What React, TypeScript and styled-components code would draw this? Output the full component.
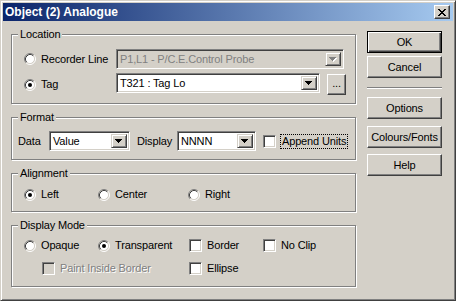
import React from "react";
import styled, { createGlobalStyle } from "styled-components";

const FACE = "#d4d0c8";
const SHADOW = "#808080";
const DARK = "#404040";
const WHITE = "#ffffff";

const GlobalStyle = createGlobalStyle`
  html, body {
    margin: 0;
    padding: 0;
    background: ${FACE};
  }
  body {
    font-family: "Liberation Sans", Arial, sans-serif;
    font-size: 11px;
    letter-spacing: -0.15px;
    color: #000;
  }
  * {
    box-sizing: border-box;
  }
`;

const Window = styled.div`
  width: 456px;
  height: 301px;
  background: ${FACE};
  border: 1px solid;
  border-color: ${FACE} ${DARK} ${DARK} ${FACE};
  box-shadow: inset 1px 1px 0 ${WHITE}, inset -1px -1px 0 ${SHADOW};
  padding: 2px;
  display: flex;
  flex-direction: column;
`;

const TitleBar = styled.div`
  flex: none;
  height: 18px;
  display: flex;
  align-items: center;
  padding: 0 3px 0 2px;
  background: linear-gradient(to right, #0a246a, #a6caf0);
`;

const Title = styled.span`
  color: ${WHITE};
  font-weight: bold;
  font-size: 12px;
  letter-spacing: 0;
  line-height: 14px;
`;

const CloseButton = styled.div`
  margin-left: auto;
  width: 16px;
  height: 14px;
  display: flex;
  align-items: center;
  justify-content: center;
  background: ${FACE};
  border: 1px solid;
  border-color: ${WHITE} ${DARK} ${DARK} ${WHITE};
  box-shadow: inset -1px -1px 0 ${SHADOW};
`;

const Body = styled.div`
  display: flex;
  align-items: flex-start;
  gap: 11px;
  padding: 7px 0 0 8px;
`;

const Groups = styled.div`
  width: 345px;
  display: flex;
  flex-direction: column;
  gap: 7px;
`;

const Group = styled.fieldset<{ $pad: string }>`
  margin: 0;
  min-width: 0;
  border: 1px solid ${SHADOW};
  box-shadow: 1px 1px 0 ${WHITE}, inset 1px 1px 0 ${WHITE};
  padding: ${(p) => p.$pad};
`;

const Legend = styled.legend`
  padding: 0 2px;
  line-height: 13px;
  background: ${FACE};
`;

const LocationGrid = styled.div`
  display: grid;
  grid-template-columns: 92px auto;
  row-gap: 6px;
  align-items: center;
  padding-left: 6px;
`;

const ControlPair = styled.div`
  display: flex;
  align-items: flex-start;
  gap: 7px;
`;

const OptionGrid = styled.div<{ $cols: string; $rowGap?: number }>`
  display: grid;
  grid-template-columns: ${(p) => p.$cols};
  row-gap: ${(p) => p.$rowGap ?? 0}px;
  padding-left: 6px;
`;

const Choice = styled.label<{ $disabled?: boolean; $indent?: number; $span?: number }>`
  display: flex;
  align-items: center;
  gap: 5px;
  height: 13px;
  line-height: 13px;
  white-space: nowrap;
  padding-left: ${(p) => p.$indent ?? 0}px;
  grid-column: ${(p) => (p.$span ? `span ${p.$span}` : "auto")};
  color: ${(p) => (p.$disabled ? SHADOW : "#000")};
  text-shadow: ${(p) => (p.$disabled ? `1px 1px 0 ${WHITE}` : "none")};
`;

const FormatRow = styled.div`
  display: flex;
  align-items: center;
`;

const FieldLabel = styled.span<{ $w: number; $lead?: number }>`
  width: ${(p) => p.$w}px;
  padding-left: ${(p) => p.$lead ?? 0}px;
  line-height: 13px;
  white-space: nowrap;
`;

const FocusText = styled.span`
  margin-left: 4px;
  padding: 0 1px;
  line-height: 13px;
  border: 1px dotted #000;
  white-space: nowrap;
`;

const CheckBox = styled.span<{ $disabled?: boolean }>`
  flex: none;
  width: 13px;
  height: 13px;
  border: 1px solid;
  border-color: ${SHADOW} ${WHITE} ${WHITE} ${SHADOW};
  box-shadow: inset 1px 1px 0 ${DARK}, inset -1px -1px 0 ${FACE};
  background: ${(p) => (p.$disabled ? FACE : WHITE)};
`;

const ComboFrame = styled.div<{ $w: number; $disabled?: boolean }>`
  flex: none;
  width: ${(p) => p.$w}px;
  height: 20px;
  display: flex;
  align-items: stretch;
  padding: 2px;
  border: 1px solid;
  border-color: ${SHADOW} ${WHITE} ${WHITE} ${SHADOW};
  box-shadow: inset 1px 1px 0 ${DARK}, inset -1px -1px 0 ${FACE};
  background: ${(p) => (p.$disabled ? FACE : WHITE)};
  margin: -1px 0;
`;

const ComboText = styled.span<{ $disabled?: boolean }>`
  flex: 1;
  padding-left: 1px;
  line-height: 14px;
  white-space: nowrap;
  overflow: hidden;
  color: ${(p) => (p.$disabled ? SHADOW : "#000")};
`;

const DropButton = styled.span`
  flex: none;
  width: 16px;
  display: flex;
  align-items: center;
  justify-content: center;
  background: ${FACE};
  border: 1px solid;
  border-color: ${FACE} ${DARK} ${DARK} ${FACE};
  box-shadow: inset 1px 1px 0 ${WHITE}, inset -1px -1px 0 ${SHADOW};
`;

const Buttons = styled.div`
  width: 75px;
  display: flex;
  flex-direction: column;
  padding-top: 3px;
`;

const PushButton = styled.div<{ $default?: boolean; $gap?: number }>`
  height: 22px;
  margin-top: ${(p) => p.$gap ?? 0}px;
  display: flex;
  align-items: center;
  justify-content: center;
  line-height: 13px;
  background: ${FACE};
  border: 1px solid;
  border-color: ${(p) =>
    p.$default ? "#000" : `${WHITE} ${DARK} ${DARK} ${WHITE}`};
  box-shadow: ${(p) =>
    p.$default
      ? `inset 1px 1px 0 ${WHITE}, inset -1px -1px 0 ${DARK}, inset -2px -2px 0 ${SHADOW}`
      : `inset -1px -1px 0 ${SHADOW}`};
`;

const SmallButton = styled(PushButton)`
  width: 19px;
  height: 21px;
  padding-bottom: 3px;
`;

const Separator = styled.div`
  height: 2px;
  margin: 9px 0 8px;
  border-top: 1px solid ${SHADOW};
  border-bottom: 1px solid ${WHITE};
`;

const Arrow = ({ disabled }: { disabled?: boolean }) => {
  const d = "M0 0h7v1H0zM1 1h5v1H1zM2 2h3v1H2zM3 3h1v1H3z";
  return (
    <svg width="8" height="5" viewBox="0 0 8 5" shapeRendering="crispEdges">
      {disabled && <path d={d} fill={WHITE} transform="translate(1 1)" />}
      <path d={d} fill={disabled ? SHADOW : "#000"} />
    </svg>
  );
};

const CloseGlyph = () => (
  <svg width="8" height="7" viewBox="0 0 8 7" shapeRendering="crispEdges">
    <path
      d="M0 0h2v1H0zM6 0h2v1H6zM1 1h2v1H1zM5 1h2v1H5zM2 2h4v1H2zM3 3h2v1H3zM2 4h4v1H2zM1 5h2v1H1zM5 5h2v1H5zM0 6h2v1H0zM6 6h2v1H6z"
      fill="#000"
    />
  </svg>
);

const Radio = ({ checked }: { checked?: boolean }) => (
  <svg width="12" height="12" viewBox="0 0 12 12" style={{ flex: "none" }}>
    <circle cx="6" cy="6" r="4.5" fill={WHITE} />
    <path d="M2.11 9.89 A5.5 5.5 0 0 1 9.89 2.11" fill="none" stroke={SHADOW} />
    <path d="M9.89 2.11 A5.5 5.5 0 0 1 2.11 9.89" fill="none" stroke={WHITE} />
    <path d="M2.82 9.18 A4.5 4.5 0 0 1 9.18 2.82" fill="none" stroke={DARK} />
    <path d="M9.18 2.82 A4.5 4.5 0 0 1 2.82 9.18" fill="none" stroke={FACE} />
    {checked && <circle cx="6" cy="6" r="2" fill="#000" />}
  </svg>
);

const Combo = ({ w, value, disabled }: { w: number; value: string; disabled?: boolean }) => (
  <ComboFrame $w={w} $disabled={disabled}>
    <ComboText $disabled={disabled}>{value}</ComboText>
    <DropButton>
      <Arrow disabled={disabled} />
    </DropButton>
  </ComboFrame>
);

const App: React.FC = () => {
  return (
    <>
      <GlobalStyle />
      <Window>
        <TitleBar>
          <Title>Object (2) Analogue</Title>
          <CloseButton>
            <CloseGlyph />
          </CloseButton>
        </TitleBar>
        <Body>
          <Groups>
            <Group $pad="9px 0 8px 6px">
              <Legend>Location</Legend>
              <LocationGrid>
                <Choice>
                  <Radio />
                  Recorder Line
                </Choice>
                <Combo w={228} value="P1,L1 - P/C.E.Control Probe" disabled />
                <Choice>
                  <Radio checked />
                  Tag
                </Choice>
                <ControlPair>
                  <Combo w={204} value="T321 : Tag Lo" />
                  <SmallButton>...</SmallButton>
                </ControlPair>
              </LocationGrid>
            </Group>

            <Group $pad="8px 0 9px 6px">
              <Legend>Format</Legend>
              <FormatRow>
                <FieldLabel $w={31}>Data</FieldLabel>
                <Combo w={81} value="Value" />
                <FieldLabel $w={47} $lead={7}>
                  Display
                </FieldLabel>
                <Combo w={79} value="NNNN" />
                <CheckBox style={{ marginLeft: 7 }} />
                <FocusText>Append Units</FocusText>
              </FormatRow>
            </Group>

            <Group $pad="8px 0 10px 6px">
              <Legend>Alignment</Legend>
              <OptionGrid $cols="74px 90px auto">
                <Choice>
                  <Radio checked />
                  Left
                </Choice>
                <Choice>
                  <Radio />
                  Center
                </Choice>
                <Choice>
                  <Radio />
                  Right
                </Choice>
              </OptionGrid>
            </Group>

            <Group $pad="7px 0 11px 6px">
              <Legend>Display Mode</Legend>
              <OptionGrid $cols="74px 91px 74px auto" $rowGap={10}>
                <Choice>
                  <Radio />
                  Opaque
                </Choice>
                <Choice>
                  <Radio checked />
                  Transparent
                </Choice>
                <Choice>
                  <CheckBox />
                  Border
                </Choice>
                <Choice>
                  <CheckBox />
                  No Clip
                </Choice>
                <Choice $disabled $indent={18} $span={2}>
                  <CheckBox $disabled />
                  Paint Inside Border
                </Choice>
                <Choice>
                  <CheckBox />
                  Ellipse
                </Choice>
              </OptionGrid>
            </Group>
          </Groups>

          <Buttons>
            <PushButton $default>OK</PushButton>
            <PushButton $gap={3}>Cancel</PushButton>
            <Separator />
            <PushButton>Options</PushButton>
            <PushButton $gap={7}>Colours/Fonts</PushButton>
            <PushButton $gap={6}>Help</PushButton>
          </Buttons>
        </Body>
      </Window>
    </>
  );
};

export default App;
